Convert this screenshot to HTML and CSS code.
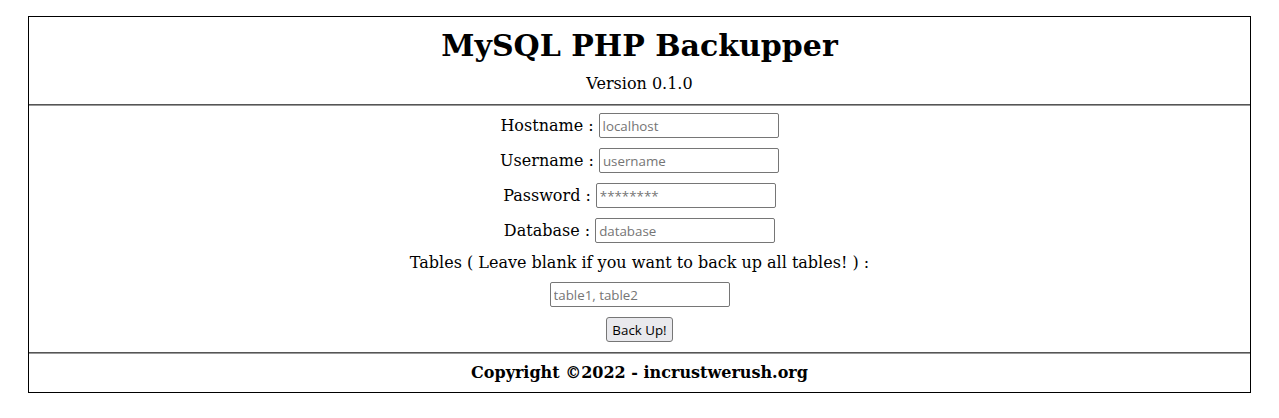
FILE: index.html
```html
<!DOCTYPE html>
<html>
<head>
<meta charset="utf-8">
<title>MySQL PHP Backupper</title>
<link rel="stylesheet" href="styles.css">
</head>
<body>
<div class="box">
  <header class="head">
    <h1 class="title">MySQL PHP Backupper</h1>
    <p class="version">Version 0.1.0</p>
  </header>
  <hr class="rule">
  <form class="form">
    <div class="row"><label class="lbl">Hostname :</label><input class="field" type="text" placeholder="localhost"></div>
    <div class="row"><label class="lbl">Username :</label><input class="field" type="text" placeholder="username"></div>
    <div class="row"><label class="lbl">Password :</label><input class="field" type="password" placeholder="********"></div>
    <div class="row"><label class="lbl">Database :</label><input class="field" type="text" placeholder="database"></div>
    <div class="row"><label class="lbl">Tables ( Leave blank if you want to back up all tables! ) :</label></div>
    <div class="row"><input class="field" type="text" placeholder="table1, table2"></div>
    <div class="row"><button class="btn" type="button">Back Up!</button></div>
  </form>
  <hr class="rule">
  <footer class="foot">Copyright ©2022 - incrustwerush.org</footer>
</div>
</body>
</html>
```

FILE: styles.css
```css
body {
  margin: 8px;
  font-family: "DejaVu Serif", serif;
  color: #000;
  background: #fff;
}
.box {
  margin: 8px 20px 0;
  border: 1px solid #000;
}
.head {
  padding: 10px 0 11px;
  text-align: center;
}
.title {
  margin: 0;
  font-size: 30px;
  line-height: 38px;
  font-weight: bold;
}
.version {
  margin: 9px 0 0;
  font-size: 16px;
  line-height: 19px;
}
.rule {
  margin: 0;
  border: 0;
  border-top: 1px solid #555;
  border-bottom: 1px solid #999;
  height: 0;
}
.form {
  padding: 7px 0 10px;
  display: flex;
  flex-direction: column;
  gap: 10px;
}
.row {
  display: flex;
  justify-content: center;
  align-items: center;
  gap: 5px;
}
.lbl {
  font-size: 16px;
  line-height: 19px;
}
.field {
  box-sizing: border-box;
  width: 180px;
  height: 25px;
  margin: 0;
  padding: 1px 3px;
  border: 1px solid #767676;
  border-radius: 2px;
  font-family: "Open Sans", sans-serif;
  font-size: 13.33px;
  background: #fff;
}
.field::placeholder {
  color: #757575;
}
.btn {
  box-sizing: border-box;
  height: 25px;
  padding: 0 5px;
  border: 1px solid #767676;
  border-radius: 3px;
  background: #e9e9ed;
  font-family: "Open Sans", sans-serif;
  font-size: 13.33px;
  color: #000;
}
.foot {
  height: 38px;
  line-height: 38px;
  text-align: center;
  font-weight: bold;
  font-size: 16px;
}
```
